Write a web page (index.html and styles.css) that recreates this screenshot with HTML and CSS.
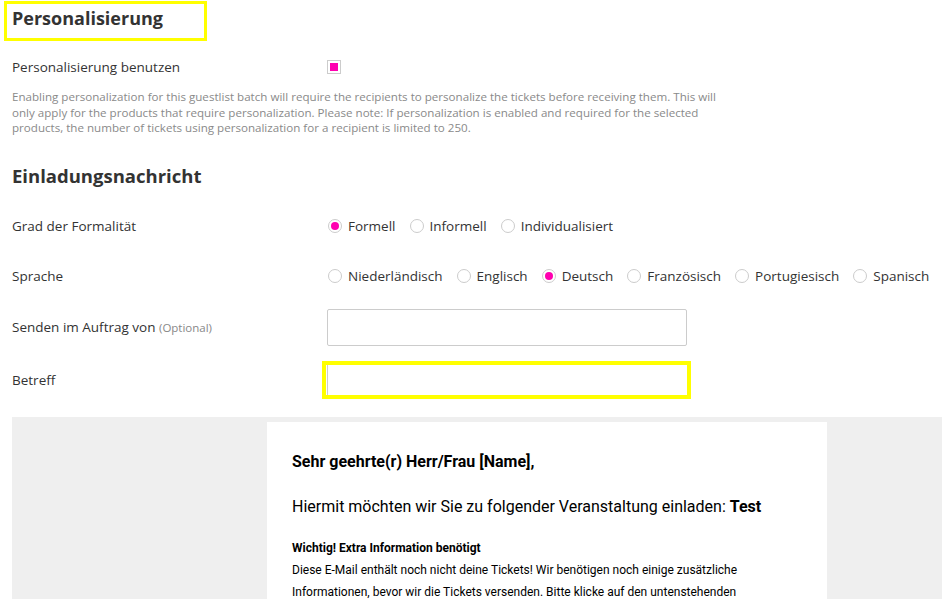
FILE: index.html
```html
<!DOCTYPE html>
<html lang="de">
<head>
<meta charset="utf-8">
<title>Einladung</title>
<link rel="stylesheet" href="styles.css">
</head>
<body>
<div class="page">
  <div class="hl-title"><h2 class="section-title">Personalisierung</h2></div>

  <div class="check-row">
    <span class="label">Personalisierung benutzen</span>
    <span class="checkbox checked"></span>
  </div>
  <p class="help">Enabling personalization for this guestlist batch will require the recipients to personalize the tickets before receiving them. This will<br>only apply for the products that require personalization. Please note: If personalization is enabled and required for the selected<br>products, the number of tickets using personalization for a recipient is limited to 250.</p>

  <h2 class="section-title second">Einladungsnachricht</h2>

  <div class="form">
    <div class="row">
      <div class="label">Grad der Formalität</div>
      <div class="radios">
        <span class="radio checked"></span><span class="opt">Formell</span>
        <span class="radio"></span><span class="opt">Informell</span>
        <span class="radio"></span><span class="opt">Individualisiert</span>
      </div>
    </div>

    <div class="row r2">
      <div class="label">Sprache</div>
      <div class="radios">
        <span class="radio"></span><span class="opt">Niederländisch</span>
        <span class="radio"></span><span class="opt">Englisch</span>
        <span class="radio checked"></span><span class="opt">Deutsch</span>
        <span class="radio"></span><span class="opt">Französisch</span>
        <span class="radio"></span><span class="opt">Portugiesisch</span>
        <span class="radio"></span><span class="opt">Spanisch</span>
      </div>
    </div>

    <div class="row r3">
      <div class="label">Senden im Auftrag von <span class="optional">(Optional)</span></div>
      <input class="input" type="text">
    </div>

    <div class="row r4">
      <div class="label">Betreff</div>
      <div class="hl-input"><input class="input inner" type="text"></div>
    </div>
  </div>

  <div class="preview">
    <div class="mail">
      <p class="greet">Sehr geehrte(r) Herr/Frau [Name],</p>
      <p class="intro">Hiermit möchten wir Sie zu folgender Veranstaltung einladen: <b>Test</b></p>
      <p class="important"><b>Wichtig! Extra Information benötigt</b><br>Diese E-Mail enthält noch nicht deine Tickets! Wir benötigen noch einige zusätzliche<br>Informationen, bevor wir die Tickets versenden. Bitte klicke auf den untenstehenden</p>
    </div>
  </div>
</div>
</body>
</html>
```

FILE: styles.css
```css
html, body {
  margin: 0;
  padding: 0;
  background: #fff;
  overflow: hidden;
}
body {
  font-family: "Open Sans", Lato, sans-serif;
  color: #333;
}
.page {
  width: 942px;
  height: 599px;
  overflow: hidden;
}
.hl-title {
  margin: 1px 0 0 4px;
  width: 197px;
  height: 34px;
  border: 3px solid #ffff00;
  display: flex;
  align-items: center;
}
.section-title {
  margin: 0;
  font-size: 18px;
  font-weight: 700;
  color: #333;
  padding-left: 5px;
  line-height: 26px;
}
.hl-title .section-title {
  margin-top: -6px;
}
.section-title.second {
  padding-left: 12px;
  margin-top: 27px;
  height: 26px;
  font-size: 18.5px;
}
.label {
  font-size: 13.5px;
  color: #333;
  width: 315px;
  flex: none;
}
.check-row {
  display: flex;
  align-items: center;
  padding-left: 12px;
  margin-top: 16px;
  height: 20px;
}
.checkbox {
  width: 12px;
  height: 12px;
  border: 1px solid #ccc;
  background: #fff;
  display: flex;
  align-items: center;
  justify-content: center;
}
.checkbox.checked::after {
  content: "";
  width: 8px;
  height: 8px;
  background: #ff00b0;
}
.help {
  margin: 12px 0 0 12px;
  font-size: 11.6px;
  line-height: 15.5px;
  color: #8a8a8a;
  white-space: nowrap;
}
.form {
  padding-left: 12px;
  margin-top: 19px;
}
.row {
  display: flex;
  align-items: center;
  height: 37px;
}
.row.r2 { margin-top: 13px; }
.row.r3 { margin-top: 14px; }
.row.r4 { margin-top: 16px; }
.radios {
  display: flex;
  align-items: center;
  font-size: 13.5px;
  color: #333;
}
.radio {
  width: 12px;
  height: 12px;
  border: 1px solid #ccc;
  border-radius: 50%;
  display: flex;
  align-items: center;
  justify-content: center;
  margin-left: 1px;
}
.radio.checked::after {
  content: "";
  width: 8px;
  height: 8px;
  border-radius: 50%;
  background: #ff00b0;
}
.opt {
  margin-left: 6px;
  margin-right: 13px;
}
.optional {
  font-size: 11.5px;
  color: #888;
}
.input {
  width: 360px;
  height: 37px;
  box-sizing: border-box;
  border: 1px solid #ccc;
  border-radius: 2px;
  background: #fff;
  margin: 0;
  padding: 0 8px;
}
.hl-input {
  margin-left: -5px;
  width: 361px;
  height: 30px;
  border: 4px solid #ffff00;
  display: flex;
}
.input.inner {
  width: 360px;
  height: 30px;
  border: none;
  border-left: 1px solid #ccc;
  border-radius: 0;
  margin-left: 1px;
}
.preview {
  margin: 18px 0 0 12px;
  background: #efefef;
  padding: 5px 0 0 255px;
  height: 300px;
}
.mail {
  width: 560px;
  background: #fff;
  padding: 28px 25px;
  box-sizing: border-box;
  height: 300px;
  font-family: Roboto, "Liberation Sans", sans-serif;
  color: #000;
}
.mail p {
  margin: 0;
}
.greet {
  font-size: 16px;
  font-weight: 700;
  line-height: 24px;
}
.intro {
  font-size: 16px;
  line-height: 24px;
  margin-top: 21px !important;
}
.important {
  font-size: 12px;
  line-height: 22px;
  margin-top: 18px !important;
}
```
